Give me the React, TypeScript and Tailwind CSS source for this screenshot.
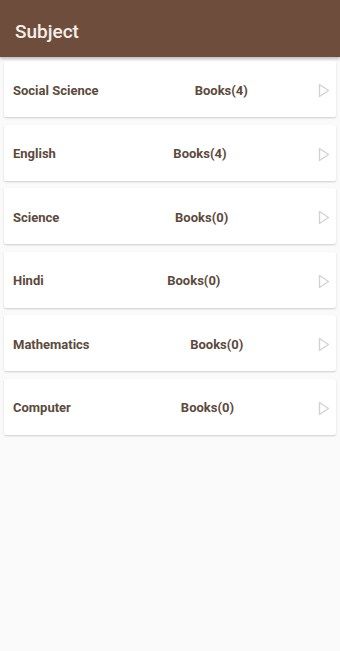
const SUBJECTS = [
  { name: 'Social Science', books: 4 },
  { name: 'English', books: 4 },
  { name: 'Science', books: 0 },
  { name: 'Hindi', books: 0 },
  { name: 'Mathematics', books: 0 },
  { name: 'Computer', books: 0 },
];

const PlayOutline = () => (
  <svg width="12" height="15" viewBox="0 0 12 15" fill="none" className="shrink-0">
    <path d="M1.5 1.5 L10.5 7.5 L1.5 13.5 Z" stroke="#d2d2d2" strokeWidth="1.4" strokeLinejoin="round" />
  </svg>
);

export default function App() {
  return (
    <div className="min-h-[651px] w-[340px] bg-[#fafafa]" style={{ fontFamily: 'Roboto, "Noto Sans", sans-serif' }}>
      <header className="flex h-[57px] items-center bg-[#6e4d3d] px-[15px] pt-[7px] shadow-[0_2px_3px_rgba(0,0,0,0.25)]">
        <h1 className="text-[19px] font-medium text-[#f5efea]">Subject</h1>
      </header>

      <div className="flex flex-col gap-[7.5px] px-[4px] pt-[4px]">
        {SUBJECTS.map((subject) => (
          <div
            key={subject.name}
            className="flex h-[56px] items-center rounded-[2px] bg-white pl-[9px] pr-[6px] pt-[3px] shadow-[0_1px_2px_rgba(0,0,0,0.18)]"
          >
            <span className="text-[13px] font-bold text-[#5c4a3e]">{subject.name}</span>
            <span className="ml-[26px] flex-1 text-center text-[13px] font-bold text-[#5c4a3e]">
              Books({subject.books})
            </span>
            <PlayOutline />
          </div>
        ))}
      </div>
    </div>
  );
}
